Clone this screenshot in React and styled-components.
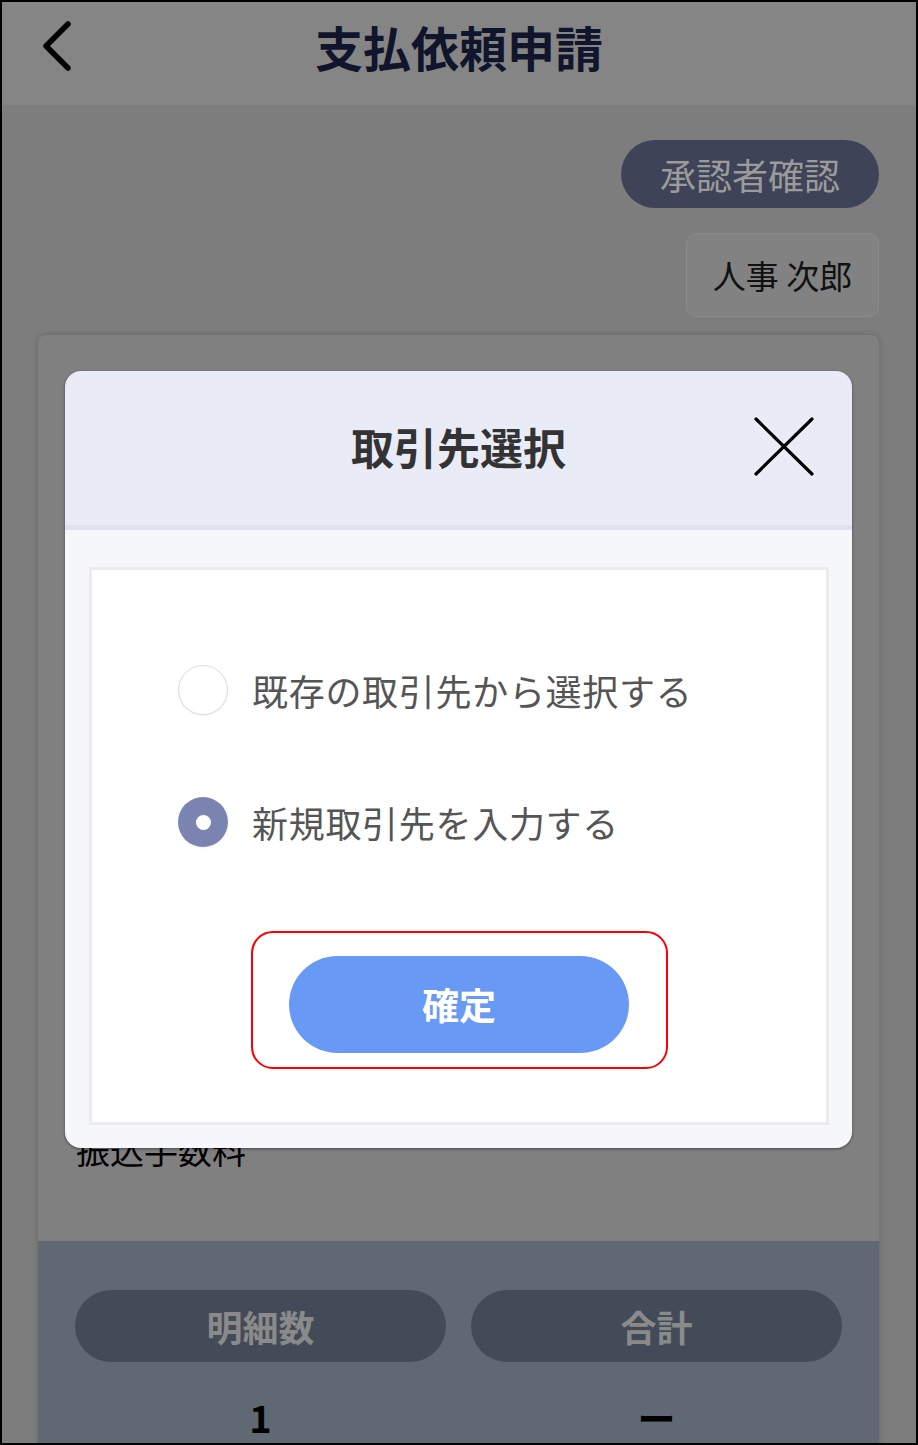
import React from "react";
import styled, { createGlobalStyle } from "styled-components";

const Global = createGlobalStyle`
  html, body { margin: 0; padding: 0; background: #000; }
  body { font-family: "Noto Sans CJK JP", "Noto Sans", sans-serif; }
  * { box-sizing: border-box; }
`;

const Frame = styled.div`
  position: relative;
  width: 918px;
  height: 1445px;
  border: 2px solid #000;
  background: #7d7d7d;
  overflow: hidden;
  font-family: "Noto Sans CJK JP", "Noto Sans", sans-serif;
`;

const Header = styled.header`
  height: 103px;
  background: #858585;
  display: grid;
  grid-template-columns: 1fr auto 1fr;
  align-items: center;
  padding-bottom: 16px;
`;

const BackButton = styled.button`
  justify-self: start;
  margin-left: 34px;
  width: 40px;
  height: 52px;
  padding: 0;
  border: none;
  background: transparent;
  display: flex;
  align-items: center;
  justify-content: center;
`;

const Title = styled.h1`
  margin: 0;
  font-size: 48px;
  font-weight: 700;
  line-height: 1;
  color: #10152c;
  letter-spacing: 0;
`;

const Content = styled.main`
  display: flex;
  flex-direction: column;
  align-items: flex-end;
  padding: 35px 37px 0 36px;
`;

const ApproverPill = styled.div`
  width: 258px;
  height: 68px;
  border-radius: 34px;
  background: #3e4358;
  color: #9b9b9b;
  font-size: 36px;
  display: flex;
  align-items: center;
  justify-content: center;
`;

const NameBox = styled.div`
  margin-top: 25px;
  width: 193px;
  height: 84px;
  border-radius: 10px;
  background: #828282;
  border: 1px solid #8a8a8a;
  color: #111;
  font-size: 33px;
  display: flex;
  align-items: center;
  justify-content: center;
`;

const Card = styled.section`
  margin-top: 18px;
  align-self: stretch;
  background: #808080;
  border-radius: 8px 8px 0 0;
  box-shadow: 0 0 6px rgba(0, 0, 0, 0.18);
  overflow: hidden;
`;

const CardBody = styled.div`
  padding: 789px 38px 66px;
`;

const FieldLabel = styled.div`
  font-size: 34px;
  line-height: 51px;
  color: #000;
`;

const Summary = styled.div`
  background: #5f6873;
  padding: 49px 37px 40px;
  display: grid;
  grid-template-columns: 1fr 1fr;
  column-gap: 25px;
`;

const SummaryPill = styled.div`
  height: 72px;
  border-radius: 36px;
  background: #424b57;
  color: #8a8a8a;
  font-size: 36px;
  font-weight: 700;
  display: flex;
  align-items: center;
  justify-content: center;
`;

const SummaryValue = styled.div`
  margin-top: 33px;
  text-align: center;
  font-size: 38px;
  font-weight: 700;
  line-height: 44px;
  color: #000;
`;

const Modal = styled.div`
  position: absolute;
  top: 369px;
  left: 63px;
  width: 787px;
  border-radius: 16px;
  box-shadow: 0 1px 3px rgba(0, 0, 0, 0.45);
  overflow: hidden;
`;

const ModalHeader = styled.div`
  height: 159px;
  background: #e9ebf6;
  border-bottom: 5px solid #dfe1f0;
  display: grid;
  grid-template-columns: 1fr auto 1fr;
  align-items: center;
  padding-bottom: 3px;
`;

const ModalTitle = styled.h2`
  grid-column: 2;
  margin: 0;
  font-size: 43px;
  font-weight: 700;
  line-height: 1;
  color: #333;
`;

const CloseButton = styled.button`
  justify-self: end;
  margin-right: 36px;
  width: 64px;
  height: 62px;
  padding: 0;
  border: none;
  background: transparent;
  display: flex;
  align-items: center;
  justify-content: center;
`;

const ModalBody = styled.div`
  background: #f6f7fb;
  padding: 37px 23px 23px 24px;
`;

const InnerBox = styled.div`
  background: #fff;
  border: 3px solid #ececef;
  display: flex;
  flex-direction: column;
  padding: 95px 0 53px;
`;

const RadioList = styled.div`
  display: flex;
  flex-direction: column;
  gap: 82px;
  padding-left: 86px;
`;

const RadioRow = styled.label`
  display: flex;
  align-items: center;
  height: 50px;
`;

const RadioCircle = styled.span`
  width: 50px;
  height: 50px;
  border-radius: 50%;
  flex-shrink: 0;
  display: flex;
  align-items: center;
  justify-content: center;
  background: ${(p) => (p.$checked ? "#7b84b0" : "#fff")};
  border: ${(p) => (p.$checked ? "none" : "1.5px solid #dcdcdc")};
  box-shadow: 0 1px 2px rgba(0, 0, 0, 0.06);
  &::after {
    content: "";
    display: ${(p) => (p.$checked ? "block" : "none")};
    width: 15px;
    height: 15px;
    border-radius: 50%;
    background: #fff;
  }
`;

const RadioLabel = styled.span`
  margin-left: 24px;
  font-size: 36px;
  line-height: 50px;
  letter-spacing: 0.7px;
  color: #555;
`;

const Highlight = styled.div`
  align-self: center;
  margin-top: 84px;
  width: 417px;
  height: 138px;
  border: 2px solid #f00;
  border-radius: 22px;
  display: flex;
  justify-content: center;
  padding-top: 23px;
`;

const ConfirmButton = styled.button`
  width: 340px;
  height: 97px;
  border: none;
  border-radius: 49px;
  background: #6899f5;
  color: #fff;
  font-family: "Noto Sans CJK JP", "Noto Sans", sans-serif;
  font-size: 37px;
  font-weight: 700;
  display: flex;
  align-items: center;
  justify-content: center;
  padding-bottom: 3px;
`;

export default function App() {
  return (
    <>
      <Global />
      <Frame>
        <Header>
          <BackButton aria-label="戻る">
            <svg width="36" height="52" viewBox="0 0 36 52">
              <path
                d="M30 4 L8 26 L30 48"
                fill="none"
                stroke="#000"
                strokeWidth="5.5"
                strokeLinecap="round"
                strokeLinejoin="round"
              />
            </svg>
          </BackButton>
          <Title>支払依頼申請</Title>
          <span />
        </Header>
        <Content>
          <ApproverPill>承認者確認</ApproverPill>
          <NameBox>人事 次郎</NameBox>
          <Card>
            <CardBody>
              <FieldLabel>振込手数料</FieldLabel>
            </CardBody>
            <Summary>
              <SummaryPill>明細数</SummaryPill>
              <SummaryPill>合計</SummaryPill>
              <SummaryValue>1</SummaryValue>
              <SummaryValue>ー</SummaryValue>
            </Summary>
          </Card>
        </Content>
        <Modal>
          <ModalHeader>
            <ModalTitle>取引先選択</ModalTitle>
            <CloseButton aria-label="閉じる">
              <svg width="64" height="62" viewBox="0 0 64 62">
                <path
                  d="M4 3 L60 58 M60 3 L4 58"
                  fill="none"
                  stroke="#000"
                  strokeWidth="3.2"
                  strokeLinecap="round"
                />
              </svg>
            </CloseButton>
          </ModalHeader>
          <ModalBody>
            <InnerBox>
              <RadioList>
                <RadioRow>
                  <RadioCircle />
                  <RadioLabel>既存の取引先から選択する</RadioLabel>
                </RadioRow>
                <RadioRow>
                  <RadioCircle $checked />
                  <RadioLabel>新規取引先を入力する</RadioLabel>
                </RadioRow>
              </RadioList>
              <Highlight>
                <ConfirmButton>確定</ConfirmButton>
              </Highlight>
            </InnerBox>
          </ModalBody>
        </Modal>
      </Frame>
    </>
  );
}
